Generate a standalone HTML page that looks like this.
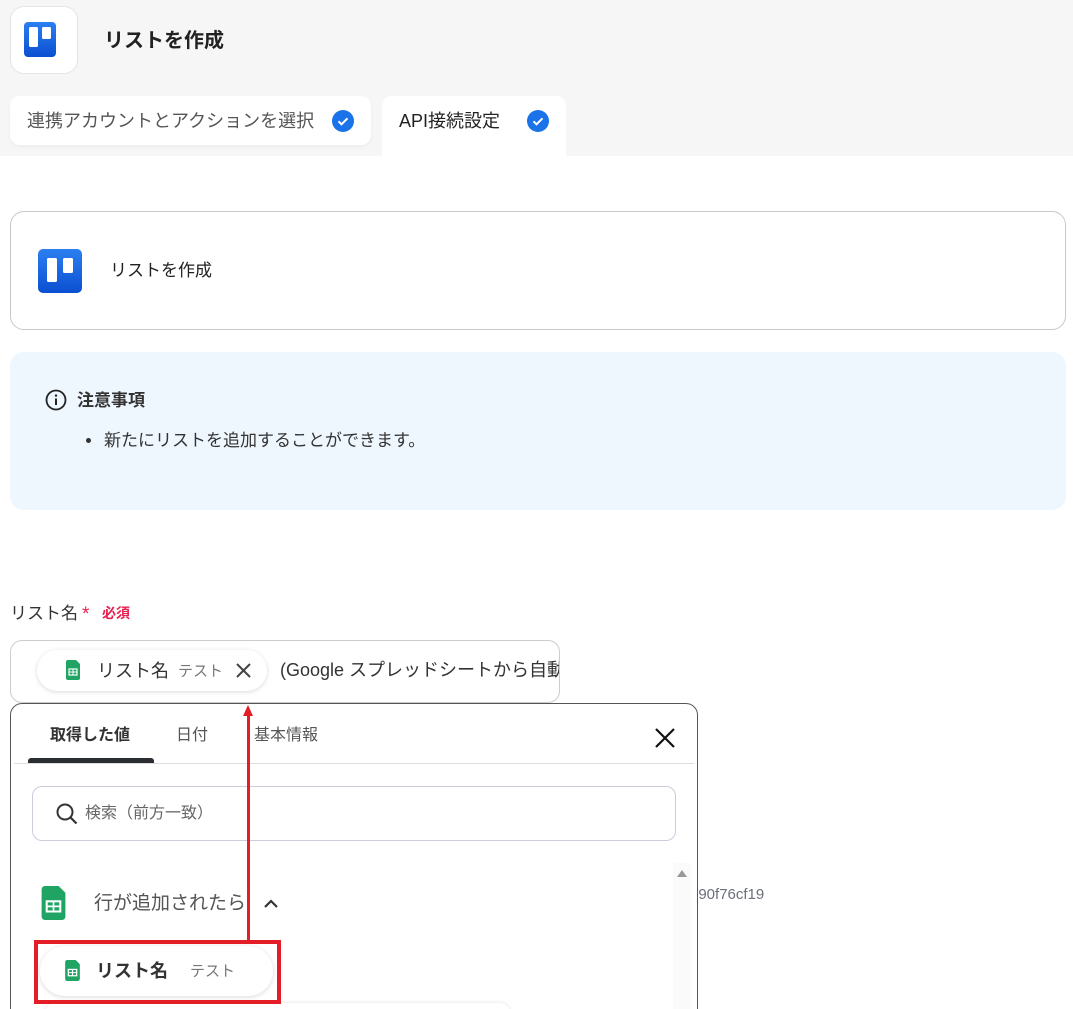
<!DOCTYPE html>
<html style="width:1073px;height:1009px;overflow:hidden"><head><meta charset="utf-8"><style>
*{box-sizing:border-box;margin:0;padding:0}
body{width:1073px;height:1009px;overflow:hidden;background:#fff;font-family:"Liberation Sans","Noto Sans CJK JP",sans-serif;color:#222;position:relative}
.a{position:absolute}
.t{white-space:nowrap;line-height:1}
</style></head><body>
<div class="a" style="left:0;top:0;width:1073px;height:156px;background:#f6f6f6"></div>
<div class="a" style="left:10px;top:6px;width:68px;height:68px;background:#fff;border:1px solid #e4e4e4;border-radius:14px"></div>
<svg class="a" style="left:24px;top:22px" width="32" height="36" viewBox="0 0 32 36"><defs><linearGradient id="g" x1="0" y1="0" x2="0" y2="1"><stop offset="0" stop-color="#2b7ff0"/><stop offset="1" stop-color="#0b4fd1"/></linearGradient></defs><rect width="32" height="35" rx="4" fill="url(#g)"/><rect x="5" y="5" width="9" height="20" rx="1.5" fill="#fff"/><rect x="18" y="5" width="9" height="12" rx="1.5" fill="#fff"/></svg>
<div class="a t" style="left:104px;top:31px;font-size:20px;font-weight:bold">リストを作成</div>
<div class="a" style="left:10px;top:96px;width:361px;height:49px;background:#fff;border-radius:10px;box-shadow:0 2px 4px rgba(0,0,0,.04)"></div>
<div class="a t" style="left:27px;top:112px;font-size:18px;color:#555">連携アカウントとアクションを選択</div>
<svg class="a" style="left:332px;top:110px" width="22" height="22"><circle cx="11" cy="11" r="11" fill="#1a73e8"/><path d="M6.5 11.3l3 3 6-6" stroke="#fff" stroke-width="2" fill="none"/></svg>
<div class="a" style="left:382px;top:96px;width:184px;height:60px;background:#fff;border-radius:10px 10px 0 0"></div>
<div class="a t" style="left:399px;top:112px;font-size:18px;color:#222">API接続設定</div>
<svg class="a" style="left:527px;top:110px" width="22" height="22"><circle cx="11" cy="11" r="11" fill="#1a73e8"/><path d="M6.5 11.3l3 3 6-6" stroke="#fff" stroke-width="2" fill="none"/></svg>

<div class="a" style="left:10px;top:211px;width:1056px;height:119px;border:1px solid #c8c8c8;border-radius:14px"></div>
<svg class="a" style="left:38px;top:249px" width="44" height="44" viewBox="0 0 44 44"><rect width="44" height="44" rx="5" fill="url(#g)"/><rect x="9" y="9" width="10" height="24" rx="1.5" fill="#fff"/><rect x="25" y="9" width="10" height="15" rx="1.5" fill="#fff"/></svg>
<div class="a t" style="left:110px;top:262px;font-size:17px">リストを作成</div>

<div class="a" style="left:10px;top:352px;width:1056px;height:158px;background:#eef6fe;border-radius:14px"></div>
<svg class="a" style="left:45px;top:389px" width="22" height="22"><circle cx="11" cy="11" r="9.5" stroke="#222" stroke-width="1.8" fill="none"/><rect x="10" y="9.5" width="2" height="6.5" fill="#222"/><circle cx="11" cy="6.6" r="1.2" fill="#222"/></svg>
<div class="a t" style="left:77px;top:392px;font-size:17px;font-weight:bold;color:#333">注意事項</div>
<div class="a" style="left:86px;top:438px;width:5px;height:5px;border-radius:50%;background:#333"></div>
<div class="a t" style="left:104px;top:432px;font-size:17px;color:#333">新たにリストを追加することができます。</div>

<div class="a t" style="left:10px;top:605px;font-size:17px;color:#333">リスト名</div>
<div class="a t" style="left:82px;top:605px;font-size:19px;color:#e8204f">*</div>
<div class="a t" style="left:102px;top:606px;font-size:14px;color:#e8204f;font-weight:bold">必須</div>

<div class="a" style="left:10px;top:640px;width:550px;height:63px;border:1px solid #ccc;border-radius:12px;overflow:hidden">
<div class="a t" style="left:269px;top:20px;font-size:18px;color:#333">(Google スプレッドシートから自動</div>
</div>
<div class="a" style="left:37px;top:650px;width:230px;height:41px;background:#fff;border-radius:21px;box-shadow:0 1px 5px rgba(0,0,0,.15)"></div>
<svg class="a" style="left:66px;top:660px" width="14" height="20" viewBox="0 0 14 20"><path d="M0 2a2 2 0 012-2h8l4 4v14a2 2 0 01-2 2H2a2 2 0 01-2-2z" fill="#1fa463"/><rect x="3" y="9" width="8" height="6" fill="none" stroke="#fff" stroke-width="1.2"/><path d="M7 9v6M3 12h8" stroke="#fff" stroke-width="1"/></svg>
<div class="a t" style="left:97px;top:662px;font-size:18px;color:#333">リスト名</div>
<div class="a t" style="left:178px;top:664px;font-size:15px;color:#777">テスト</div>
<svg class="a" style="left:235px;top:662px" width="17" height="17"><path d="M2 2l13 13M15 2L2 15" stroke="#444" stroke-width="2"/></svg>

<div class="a t" style="left:690px;top:887px;font-size:15px;color:#6a6f78">490f76cf19</div>
<div class="a" style="left:10px;top:703px;width:688px;height:330px;border:1px solid #555;border-radius:12px;background:#fff"></div>
<div class="a t" style="left:50px;top:728px;font-size:16px;font-weight:bold;color:#333">取得した値</div>
<div class="a t" style="left:176px;top:728px;font-size:16px;color:#555">日付</div>
<div class="a t" style="left:254px;top:728px;font-size:16px;color:#555">基本情報</div>
<div class="a" style="left:28px;top:758px;width:126px;height:5px;background:#2a2e33;border-radius:3px 3px 0 0"></div>
<div class="a" style="left:14px;top:763px;width:680px;height:1px;background:#ddd"></div>
<svg class="a" style="left:654px;top:727px" width="22" height="22"><path d="M2 2l18 18M20 2L2 20" stroke="#111" stroke-width="2.2"/></svg>
<div class="a" style="left:32px;top:786px;width:644px;height:55px;border:1px solid #ccd;border-radius:10px"></div>
<svg class="a" style="left:55px;top:802px" width="24" height="24"><circle cx="10" cy="10" r="7.5" stroke="#333" stroke-width="2" fill="none"/><path d="M15.5 15.5l6 6" stroke="#333" stroke-width="2.2"/></svg>
<div class="a t" style="left:85px;top:806px;font-size:16px;color:#666">検索（前方一致）</div>
<div class="a" style="left:673px;top:863px;width:18px;height:150px;background:#fafafa"></div>
<svg class="a" style="left:676px;top:869px" width="12" height="10"><path d="M6 1l5 7H1z" fill="#999"/></svg>
<svg class="a" style="left:40px;top:886px" width="27" height="34" viewBox="0 0 14 20"><path d="M0 2a2 2 0 012-2h8l4 4v14a2 2 0 01-2 2H2a2 2 0 01-2-2z" fill="#1fa463"/><rect x="3" y="9" width="8" height="6" fill="none" stroke="#fff" stroke-width="1.2"/><path d="M7 9v6M3 12h8" stroke="#fff" stroke-width="1"/></svg>
<div class="a t" style="left:94px;top:894px;font-size:19px;color:#555">行が追加されたら</div>
<svg class="a" style="left:263px;top:897px" width="16" height="12"><path d="M2 10l6-6 6 6" stroke="#333" stroke-width="2.2" fill="none"/></svg>
<div class="a" style="left:40px;top:946px;width:233px;height:50px;background:#fff;border-radius:25px;box-shadow:0 1px 5px rgba(0,0,0,.15)"></div>
<svg class="a" style="left:65px;top:960px" width="15" height="21" viewBox="0 0 14 20"><path d="M0 2a2 2 0 012-2h8l4 4v14a2 2 0 01-2 2H2a2 2 0 01-2-2z" fill="#1fa463"/><rect x="3" y="9" width="8" height="6" fill="none" stroke="#fff" stroke-width="1.2"/><path d="M7 9v6M3 12h8" stroke="#fff" stroke-width="1"/></svg>
<div class="a t" style="left:96px;top:962px;font-size:18px;font-weight:bold;color:#333">リスト名</div>
<div class="a t" style="left:190px;top:964px;font-size:15px;color:#777">テスト</div>
<div class="a" style="left:45px;top:1003px;width:465px;height:20px;background:#fff;border-radius:12px;box-shadow:0 0 4px rgba(0,0,0,.12)"></div>
<div class="a" style="left:34px;top:940px;width:247px;height:64px;border:4px solid #e41e26"></div>
<div class="a" style="left:246.5px;top:714px;width:3px;height:228px;background:#e41e26"></div>
<svg class="a" style="left:242px;top:705px" width="12" height="12"><path d="M6 0l5 11H1z" fill="#e41e26"/></svg>
</body></html>
